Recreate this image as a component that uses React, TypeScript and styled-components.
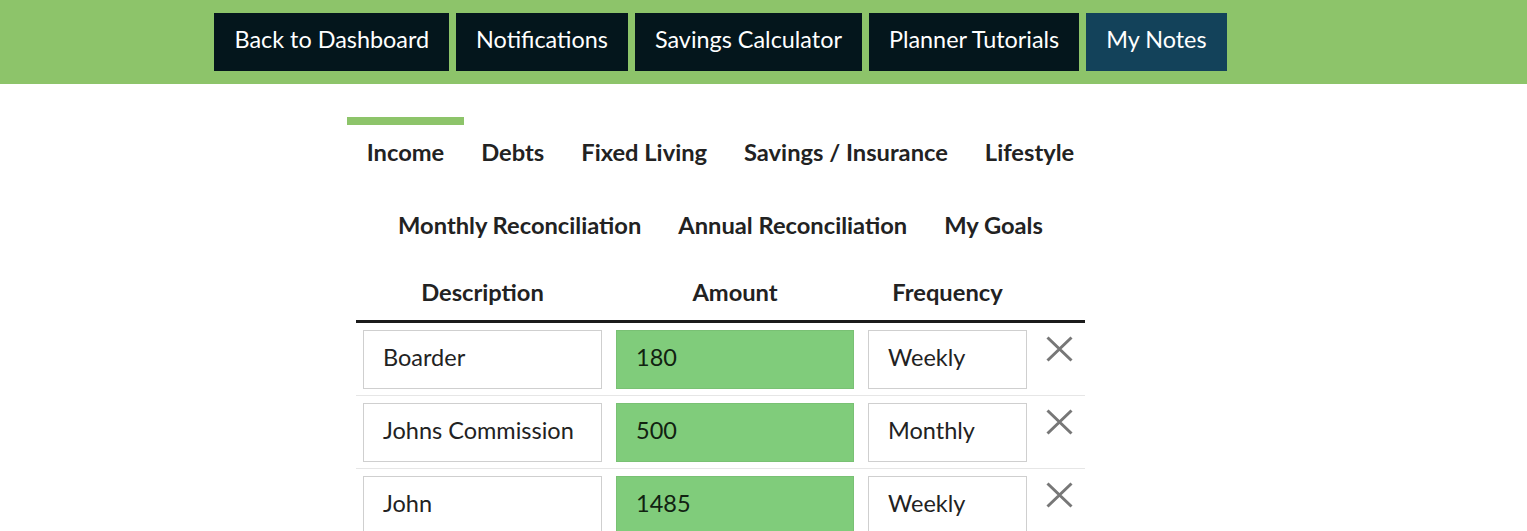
import React from "react";
import styled, { createGlobalStyle } from "styled-components";

const Global = createGlobalStyle`
  html, body { margin: 0; padding: 0; background: #ffffff; }
  body { font-family: Lato, "Open Sans", "Liberation Sans", sans-serif; color: #222222; }
  * { box-sizing: border-box; }
`;

const Page = styled.div`
  width: 1441px;
`;

const Header = styled.header`
  width: 1527px;
  background: #8dc46a;
  padding: 13px 0;
`;

const NavRow = styled.nav`
  width: 1441px;
  display: flex;
  justify-content: center;
  gap: 7px;
`;

const NavButton = styled.a<{ $active?: boolean }>`
  display: flex;
  align-items: center;
  height: 58px;
  padding: 0 20px 6px;
  background: ${(p) => (p.$active ? "#13425a" : "#04161c")};
  color: #ffffff;
  font-size: 23.4px;
  font-weight: 400;
  text-decoration: none;
  white-space: nowrap;
`;

const Tabs = styled.div`
  margin-top: 33px;
  display: flex;
  flex-direction: column;
  align-items: center;
`;

const TabRow = styled.div`
  display: flex;
  justify-content: center;
`;

const Tab = styled.div<{ $active?: boolean }>`
  border-top: 8px solid ${(p) => (p.$active ? "#8dc46a" : "transparent")};
  margin: 0 -1px;
  padding: 14px 19.5px 25px;
  line-height: 26px;
  font-size: 23.7px;
  font-weight: 700;
  color: #222222;
  white-space: nowrap;
`;

const Table = styled.div`
  width: 729px;
  margin: 0 auto;
`;

const Row = styled.div<{ $head?: boolean }>`
  display: grid;
  grid-template-columns: 253px 252px 173px 51px;
  border-bottom: ${(p) => (p.$head ? "3px solid #1b1b1b" : "1px solid #e6e6e6")};
`;

const HeadCell = styled.div`
  text-align: center;
  font-size: 23.7px;
  font-weight: 700;
  line-height: 26px;
  padding: 16px 0 15px;
  color: #222222;
`;

const Cell = styled.div`
  padding: 7px 7px 6px;
`;

const Field = styled.div<{ $green?: boolean }>`
  height: 59px;
  display: flex;
  align-items: center;
  padding: 0 0 5px 19px;
  border: 1px solid ${(p) => (p.$green ? "#79c174" : "#cfcfcf")};
  background: ${(p) => (p.$green ? "#80cc7b" : "#ffffff")};
  font-size: 23.5px;
  color: ${(p) => (p.$green ? "#112211" : "#222222")};
  white-space: nowrap;
`;

const RemoveCell = styled.div`
  padding: 13px 0 0 12px;
`;

const RemoveIcon = () => (
  <svg width="27" height="26" viewBox="0 0 27 26">
    <path d="M1.5 1.5 L25.5 24.5 M25.5 1.5 L1.5 24.5" stroke="#777777" strokeWidth="3" strokeLinecap="butt" fill="none" />
  </svg>
);

const navItems = ["Back to Dashboard", "Notifications", "Savings Calculator", "Planner Tutorials", "My Notes"];
const tabs1 = ["Income", "Debts", "Fixed Living", "Savings / Insurance", "Lifestyle"];
const tabs2 = ["Monthly Reconciliation", "Annual Reconciliation", "My Goals"];
const rows = [
  { d: "Boarder", a: "180", f: "Weekly" },
  { d: "Johns Commission", a: "500", f: "Monthly" },
  { d: "John", a: "1485", f: "Weekly" },
];

export default function App() {
  return (
    <>
      <Global />
      <Header>
        <NavRow>
          {navItems.map((n) => (
            <NavButton key={n} $active={n === "My Notes"}>
              {n}
            </NavButton>
          ))}
        </NavRow>
      </Header>
      <Page>
        <Tabs>
          <TabRow>
            {tabs1.map((t) => (
              <Tab key={t} $active={t === "Income"}>
                {t}
              </Tab>
            ))}
          </TabRow>
          <TabRow>
            {tabs2.map((t) => (
              <Tab key={t}>{t}</Tab>
            ))}
          </TabRow>
        </Tabs>
        <Table>
          <Row $head>
            <HeadCell>Description</HeadCell>
            <HeadCell>Amount</HeadCell>
            <HeadCell>Frequency</HeadCell>
            <HeadCell />
          </Row>
          {rows.map((r) => (
            <Row key={r.d}>
              <Cell>
                <Field>{r.d}</Field>
              </Cell>
              <Cell>
                <Field $green>{r.a}</Field>
              </Cell>
              <Cell>
                <Field>{r.f}</Field>
              </Cell>
              <RemoveCell>
                <RemoveIcon />
              </RemoveCell>
            </Row>
          ))}
        </Table>
      </Page>
    </>
  );
}
